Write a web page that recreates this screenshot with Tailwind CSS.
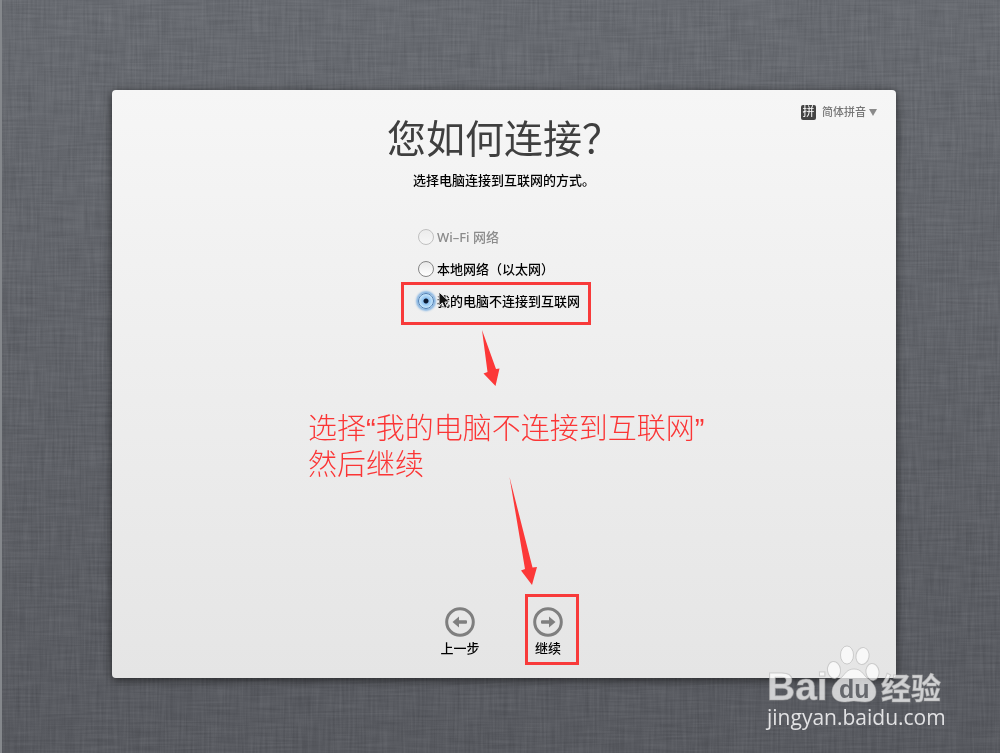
<!DOCTYPE html>
<html lang="zh-CN">
<head>
  <meta charset="UTF-8">
  <meta name="viewport" content="width=device-width, initial-scale=1.0">
  <title>您如何连接？</title>
  <script src="https://cdn.jsdelivr.net/npm/@tailwindcss/browser@4"></script>
</head>
<body class="font-['Noto_Sans','Noto_Sans_CJK_SC',sans-serif] text-black">
  <main class="relative isolate min-h-screen overflow-hidden border-l-2 border-[#85888c] bg-linear-to-b from-[#686b71] to-[#585a60] pt-[90px] pb-[75px] pl-[6px]">

    <!-- Linen texture -->
    <svg class="absolute inset-0 -z-10 h-full w-full opacity-30 mix-blend-soft-light" aria-hidden="true">
      <filter id="weave-h" x="0" y="0" width="100%" height="100%" color-interpolation-filters="sRGB">
        <feTurbulence type="fractalNoise" baseFrequency="0.025 0.45" numOctaves="2" seed="4" />
        <feColorMatrix values="1 0 0 0 0  1 0 0 0 0  1 0 0 0 0  0 0 0 0 1" />
      </filter>
      <filter id="weave-v" x="0" y="0" width="100%" height="100%" color-interpolation-filters="sRGB">
        <feTurbulence type="fractalNoise" baseFrequency="0.45 0.025" numOctaves="2" seed="9" />
        <feColorMatrix values="1 0 0 0 0  1 0 0 0 0  1 0 0 0 0  0 0 0 0 1" />
      </filter>
      <rect width="100%" height="100%" filter="url(#weave-h)" />
      <rect class="opacity-50" width="100%" height="100%" filter="url(#weave-v)" />
    </svg>

    <!-- Setup panel -->
    <section class="relative mx-auto flex min-h-[588px] w-full max-w-[784px] flex-col items-center rounded bg-linear-to-b from-[#f6f6f6] to-[#e5e5e5] pt-3 pb-5 shadow-[0_2px_10px_rgba(0,0,0,0.6)]">
      <div class="flex h-5 items-center gap-[3px] self-end pr-[19px]">
        <label for="input-source" class="mr-[3px] flex size-[15px] items-center justify-center rounded-xs bg-[#444] text-[12px] leading-none text-white">拼</label>
        <select id="input-source" class="w-[44px] appearance-none bg-transparent text-[11px] leading-5 font-medium text-[#777] outline-none">
          <option>简体拼音</option>
        </select>
        <svg class="h-[7px] w-2 fill-[#8a8a8a]" viewBox="0 0 8 7" aria-hidden="true"><path d="M0 0h8L4 7z" /></svg>
      </div>

      <h1 class="text-[39px] leading-8 text-[#3f3f3f]">您如何连接？</h1>
      <p class="mt-4 text-[13px] leading-5 font-medium">选择电脑连接到互联网的方式。</p>

      <form class="mt-[31px] w-[172px] text-[13px] leading-8 font-medium whitespace-nowrap">
        <label class="flex items-center gap-[3px] text-[#8b8b8b]">
          <input type="radio" name="network" disabled class="size-4 shrink-0 appearance-none rounded-full border border-[#c0c0c0] bg-linear-to-b from-[#ececec] to-[#f6f6f6]">
          Wi–Fi 网络
        </label>
        <label class="flex items-center gap-[3px]">
          <input type="radio" name="network" class="size-4 shrink-0 appearance-none rounded-full border border-[#858585] bg-linear-to-b from-[#e9e9e9] to-white">
          本地网络（以太网）
        </label>
        <label class="flex items-center gap-[3px]">
          <input type="radio" name="network" checked class="size-4 shrink-0 appearance-none rounded-full border border-[#4f7fb5] bg-[radial-gradient(circle,#0b1a33_0,#0b1a33_2px,#8fc3f2_3px,#c9e7fb_7px)] shadow-[0_0_2px_2px_#84b4e2]">
          我的电脑不连接到互联网
        </label>
      </form>

      <nav class="mt-auto flex gap-10 text-[13px] leading-5 font-medium">
        <button type="button" class="flex w-12 flex-col items-center gap-px">
          <svg class="size-[30px]" viewBox="0 0 30 30" fill="none" aria-hidden="true">
            <circle cx="15" cy="15" r="13.3" stroke="#7f7f7f" stroke-width="3" />
            <path d="M7.500 15l6.500-5.500v3.700h7q1 0 1 1v1.600q0 1-1 1h-7v3.700z" fill="#7f7f7f" />
          </svg>
          上一步
        </button>
        <button type="button" class="flex w-12 flex-col items-center gap-px">
          <svg class="size-[30px]" viewBox="0 0 30 30" fill="none" aria-hidden="true">
            <circle cx="15" cy="15" r="13.3" stroke="#7f7f7f" stroke-width="3" />
            <path d="M22.500 15l-6.500-5.500v3.700h-7q-1 0-1 1v1.600q0 1 1 1h7v3.700z" fill="#7f7f7f" />
          </svg>
          继续
        </button>
      </nav>

      <!-- Mouse pointer -->
      <svg class="absolute top-[201px] left-[326px] h-[19px] w-[13px]" viewBox="0 0 13 19" aria-hidden="true">
        <path d="M1 1v14l3.3-3.1 2.3 5.4 2.6-1.1-2.3-5.2h4.8z" fill="#111" stroke="#eee" />
      </svg>

      <!-- Tutorial annotations -->
      <div class="pointer-events-none absolute top-[192px] left-[289px] h-[43px] w-[190px] border-3 border-[#f83a3a]"></div>
      <div class="pointer-events-none absolute top-[504px] left-[413px] h-[71px] w-[54px] border-3 border-[#f83a3a]"></div>
      <svg class="pointer-events-none absolute top-[238px] left-[368px] h-[60px] w-5 fill-[#fc3838]" viewBox="0 0 20 60" aria-hidden="true">
        <path d="M2 2L16 41l3.500-.5L15.500 58 3.500 45.500l4-1.500z" />
      </svg>
      <svg class="pointer-events-none absolute top-[386px] left-[396px] h-[110px] w-[30px] fill-[#fc3838]" viewBox="0 0 30 110" aria-hidden="true">
        <path d="M1.500 1L24.500 91.500l4.500-.5-5 18L13 94.500l4-1.500z" />
      </svg>
      <p class="absolute top-[321px] left-[196px] font-['Liberation_Sans','Noto_Sans_CJK_SC',sans-serif] text-[29px] leading-9 font-light whitespace-nowrap text-[#fb3535]">选择“我的电脑不连接到互联网”<br>然后继续</p>
    </section>

    <!-- Watermark -->
    <svg class="absolute right-[52px] bottom-[18px] h-[92px] w-[184px]" viewBox="0 0 184 92" role="img" aria-label="Baidu 经验">
      <g fill="#fff" fill-opacity=".72" stroke="#aaa" stroke-opacity=".5" stroke-width="1">
        <text x="3" y="57" class="font-['Liberation_Sans',sans-serif] text-[39px] font-bold">Bai</text>
        <ellipse cx="70" cy="27" rx="6.500" ry="8.500" transform="rotate(-8 70 27)" />
        <ellipse cx="83" cy="12" rx="6.500" ry="9" />
        <ellipse cx="98.500" cy="13" rx="6.500" ry="8.500" transform="rotate(10 98.500 13)" />
        <ellipse cx="108.500" cy="29" rx="6.500" ry="8.500" transform="rotate(-8 108.500 29)" />
        <path d="M90 26c-7 0-9 5-12 8-5 4-10 8-10 15 0 6 5 10 12 10 5 0 7-1 10-1s6 1 11 1c7 0 11-4 11-10 0-7-5-11-10-15-3-3-5-8-12-8z" />
        <text x="117" y="56" class="font-['Noto_Sans_CJK_SC',sans-serif] text-[30px] font-bold">经验</text>
      </g>
      <text x="75" y="55" fill="#66686d" class="font-['Liberation_Sans',sans-serif] text-[25px] font-bold">du</text>
      <text x="3" y="82" fill="#e2e2e4" class="font-['Open_Sans',sans-serif] text-[21px] font-medium">jingyan.baidu.com</text>
    </svg>
  </main>
</body>
</html>
